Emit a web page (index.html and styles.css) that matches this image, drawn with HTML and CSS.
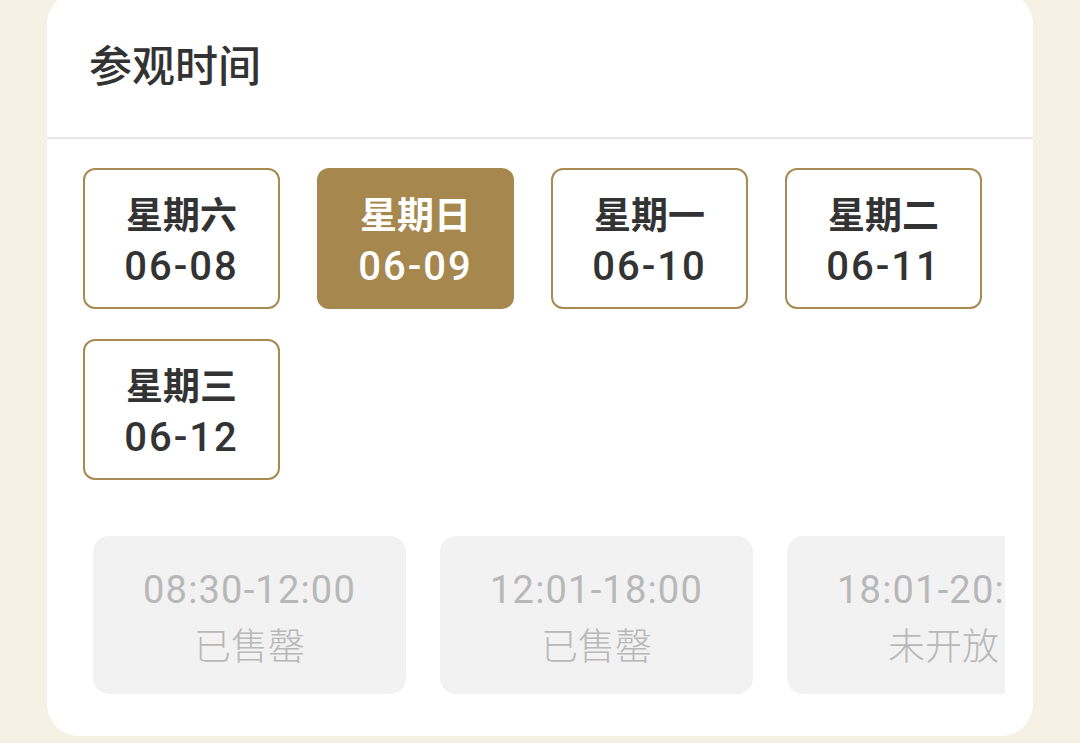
FILE: index.html
```html
<!DOCTYPE html>
<html lang="zh-CN">
<head>
<meta charset="utf-8">
<title>参观时间</title>
<link rel="stylesheet" href="styles.css">
</head>
<body>
<div class="card">
  <div class="header">参观时间</div>
  <div class="dates">
    <div class="date"><span class="wk">星期六</span><span class="dt">06-08</span></div>
    <div class="date active"><span class="wk">星期日</span><span class="dt">06-09</span></div>
    <div class="date"><span class="wk">星期一</span><span class="dt">06-10</span></div>
    <div class="date"><span class="wk">星期二</span><span class="dt">06-11</span></div>
    <div class="date"><span class="wk">星期三</span><span class="dt">06-12</span></div>
  </div>
  <div class="slots">
    <div class="slot"><span class="tm">08:30-12:00</span><span class="st">已售罄</span></div>
    <div class="slot"><span class="tm">12:01-18:00</span><span class="st">已售罄</span></div>
    <div class="slot"><span class="tm">18:01-20:00</span><span class="st">未开放</span></div>
  </div>
</div>
</body>
</html>
```

FILE: styles.css
```css
html, body {
  margin: 0;
  padding: 0;
  height: 743px;
  overflow: hidden;
  background: #f5f1e5;
  font-family: Roboto, "Noto Sans CJK SC", sans-serif;
}
.card {
  margin: -8px 0 0 47px;
  width: 986px;
  height: 744px;
  background: #fff;
  border-radius: 32px;
  box-sizing: border-box;
}
.header {
  height: 147px;
  box-sizing: border-box;
  padding: 33px 0 0 42px;
  font-family: "Noto Sans CJK SC", sans-serif;
  font-size: 43px;
  font-weight: 500;
  color: #333;
  line-height: 76px;
  border-bottom: 2px solid #e6e6e6;
}
.dates {
  display: grid;
  grid-template-columns: repeat(4, 197px);
  column-gap: 37px;
  row-gap: 30px;
  padding: 29px 0 0 36px;
}
.date {
  height: 141px;
  box-sizing: border-box;
  border: 2px solid #a98a52;
  border-radius: 12px;
  display: flex;
  flex-direction: column;
  align-items: center;
  justify-content: center;
  padding-top: 3px;
  color: #333;
}
.date.active {
  background: #a6884f;
  border-color: #a6884f;
  color: #fff;
}
.wk {
  font-family: "Noto Sans CJK SC", sans-serif;
  font-size: 37px;
  font-weight: 600;
  line-height: 54px;
}
.dt {
  font-size: 40px;
  font-weight: 500;
  letter-spacing: 2px;
  line-height: 54px;
}
.slots {
  display: flex;
  gap: 34px;
  margin: 56px 28px 0 46px;
  overflow: hidden;
}
.slot {
  flex: 0 0 313px;
  height: 158px;
  background: #f2f2f2;
  border-radius: 16px;
  display: flex;
  flex-direction: column;
  align-items: center;
  justify-content: center;
  padding-top: 3px;
  box-sizing: border-box;
  color: #b8b8b8;
}
.tm {
  font-size: 38px;
  font-weight: 400;
  letter-spacing: 1.2px;
  line-height: 54px;
}
.st {
  font-family: "Noto Sans CJK SC", sans-serif;
  font-size: 37px;
  font-weight: 300;
  line-height: 54px;
}
```
